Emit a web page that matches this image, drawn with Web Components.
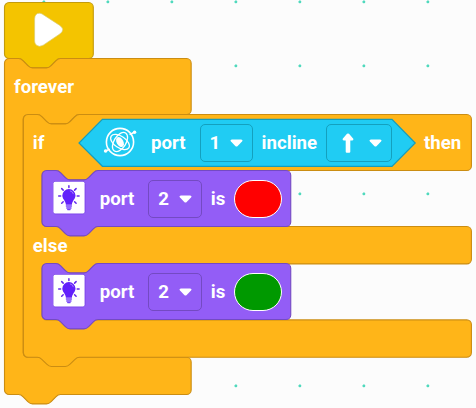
<!DOCTYPE html>
<html lang="en">
<head>
<meta charset="utf-8">
<title>Block program</title>
<style>
html,body{margin:0;width:476px;height:408px;overflow:hidden;background:#fcfcfc}
</style>
</head>
<body>
<block-workspace>
  <code-block kind="start" style="left:4px;top:3px"><play-icon></play-icon></code-block>
  <code-block kind="forever" style="left:4px;top:59px"><block-label>forever</block-label></code-block>
  <code-block kind="ifelse" style="left:23px;top:115px">
    <block-label class="if">if</block-label>
    <condition-block>
      <gyro-icon></gyro-icon>
      <block-label style="width:48.6px">port</block-label>
      <drop-field style="width:53px">1</drop-field>
      <block-label style="width:64.6px;margin-left:9px">incline</block-label>
      <drop-field style="width:66px"><arrow-icon></arrow-icon></drop-field>
    </condition-block>
    <block-label class="then">then</block-label>
    <block-label slot="else">else</block-label>
  </code-block>
  <code-block kind="action" style="left:42px;top:171px">
    <bulb-icon></bulb-icon><block-label style="width:48.6px">port</block-label>
    <drop-field style="width:53.5px">2</drop-field><block-label style="width:23.6px;margin-left:9px">is</block-label>
    <color-field style="--swatch:#f00"></color-field>
  </code-block>
  <code-block kind="action" style="left:42px;top:264px">
    <bulb-icon></bulb-icon><block-label style="width:48.6px">port</block-label>
    <drop-field style="width:53.5px">2</drop-field><block-label style="width:23.6px;margin-left:9px">is</block-label>
    <color-field style="--swatch:#009900"></color-field>
  </code-block>
</block-workspace>
<script>
const define = (name, html, setup) => customElements.define(name, class extends HTMLElement {
  constructor() {
    super();
    this.attachShadow({mode: 'open'}).innerHTML = html;
  }
  connectedCallback() { if (setup) setup(this); }
});

// Connector profile, in block units.
const tabR = 'c2 0 3 1 4 2l4 4c1 1 2 2 4 2h12c2 0 3-1 4-2l4-4c1-1 2-2 4-2';
const tabL = 'c-2 0-3 1-4 2l-4 4c-1 1-2 2-4 2h-12c-2 0-3-1-4-2l-4-4c-1-1-2-2-4-2';
const top_ = w => `M0 4A4 4 0 0 1 4 0H12${tabR}H${w - 4}a4 4 0 0 1 4 4`;
const bottom = h => `V${h - 4}a4 4 0 0 1-4 4H48${tabL}H4a4 4 0 0 1-4-4z`;
const mouth = (y1, y2, w) => `V${y1 - 4}a4 4 0 0 1-4 4H64${tabL}H20a4 4 0 0 0-4 4V${y2 - 4}a4 4 0 0 0 4 4H${w - 4}a4 4 0 0 1 4 4`;
const shapes = {
  start: {d: 'M0 4A4 4 0 0 1 4 0H72.1a4 4 0 0 1 4 4' + bottom(48), fill: '#f4c400', line: '#c39b0c', dx: .5},
  forever: {d: top_(160) + mouth(48, 256, 160) + bottom(288), fill: '#ffb518', line: '#cb8d12', dx: .5},
  ifelse: {d: top_(384) + mouth(48, 96, 384) + mouth(128, 176, 384) + bottom(208), fill: '#ffb518', line: '#cb8d12', dx: .4},
  action: {d: top_(213.2) + bottom(48), fill: '#935df6', line: '#744ac2', dx: 0}
};

define('block-workspace', `<style>
:host{display:block;position:relative;width:476px;height:408px;overflow:hidden;font:700 18.67px/22px Roboto,"Liberation Sans",sans-serif;color:#fff;
background:radial-gradient(circle at 31.9px 31.9px,#4fd9bd 0 1.1px,#4fd9bd00 1.8px) 12px -30px/64px 64px #fcfcfc}
</style><slot></slot>`);

define('code-block', `<style>
:host{display:block;position:absolute}
svg{position:absolute;left:0;top:0;overflow:visible;width:1px;height:1px}
.row{position:relative;display:flex;align-items:center;height:56px;box-sizing:border-box}
:host([kind=start]) .row{padding-left:30px}
:host([kind=forever]) .row{padding-left:10px}
:host([kind=ifelse]) .row{padding-left:9.8px;width:448px}
:host([kind=ifelse]) .else{position:relative;padding:64px 0 0 9.8px}
:host([kind=action]) .row{padding-left:10.5px;width:249px}
::slotted(.if){width:46.2px}
::slotted(.then){margin-left:9px}
</style><svg><path stroke-width=".95"/></svg>
<div class="row"><slot></slot></div><div class="else"><slot name="else"></slot></div>`, el => {
  const s = shapes[el.getAttribute('kind')], p = el.shadowRoot.querySelector('path');
  p.setAttribute('d', s.d); p.setAttribute('fill', s.fill); p.setAttribute('stroke', s.line);
  p.setAttribute('transform', `translate(${s.dx} -.45) scale(1.1667)`);
});

define('block-label', `<style>:host{display:block;flex:none;white-space:nowrap}</style><slot></slot>`);

define('condition-block', `<style>
:host{display:flex;flex:none;position:relative;align-items:center;width:336px;height:48px;box-sizing:border-box;padding-left:24px;--edge:#14a0be}
svg{position:absolute;inset:0;overflow:visible}
::slotted(*){position:relative}
</style><svg width="336" height="48"><path d="M23.4.4H313L336.2 24 313 47.3H23.4L0 24z" fill="#20ccf3" stroke="#149dbc" stroke-width="1.2"/></svg><slot></slot>`);

define('drop-field', `<style>
:host{display:flex;flex:none;align-items:center;justify-content:space-between;height:38px;box-sizing:border-box;padding:0 9px 0 8.9px;border:1.2px solid var(--edge,#744ac2);border-radius:5px}
svg{display:block;flex:none}
</style><span><slot></slot></span><svg width="13" height="8" viewBox="0 0 13 8"><path d="M1.8.4H11.2Q13.3.8 12 2.6L7.7 6.9Q6.5 8 5.3 6.9L1 2.6Q-.3.8 1.8.4z" fill="#fff"/></svg>`);

define('color-field', `<style>:host{display:block;flex:none;width:47.5px;height:38.5px;box-sizing:border-box;border:1.3px solid #fff;border-radius:19.25px;background:var(--swatch)}</style>`);

define('play-icon', `<style>:host{display:block}svg{display:block;position:relative;top:-1px}</style><svg width="31" height="36" viewBox="0 0 31 36"><path d="M.6 7Q.8 1.2 5.5 1.2 7 1.2 8.5 2.2L25.8 13.4Q31.6 17.6 25.8 22L9.2 33.2Q5.2 35.6 2.2 33 .6 31.4.6 29z" fill="#fff" stroke="#d9cd74" stroke-width=".7"/></svg>`);

define('arrow-icon', `<style>:host{display:block;margin-left:5.6px}svg{display:block}</style><svg width="12" height="20" viewBox="0 0 12 20"><path d="M5 .8Q6 0 7 .8L11.3 5.8Q11.8 7.4 10.3 7.6H8.3V18.8Q8.3 19.8 7.2 19.8H4.8Q3.7 19.8 3.7 18.8V7.6H1.7Q.2 7.4.7 5.8z" fill="#fff"/></svg>`);

define('gyro-icon', `<style>:host{display:block;flex:none;width:48px}svg{display:block;position:relative;top:-1px}</style><svg width="34" height="34" viewBox="-17 -17 34 34" fill="none" stroke="#fff" stroke-width="1.3" stroke-linecap="round">
<circle r="13.6" stroke-width="1.6"/>
<ellipse rx="10.6" ry="5.8" transform="rotate(34)"/>
<ellipse rx="10.6" ry="6" transform="rotate(-58)"/>
<ellipse rx="3.4" ry="5.4" transform="rotate(-28)" fill="#fff" stroke="none"/>
<path d="M10.2-7.6l4-2.2M-10.8 7.4l-3.4 1.6" stroke-width="1.6"/>
<circle cx="14.6" cy="-9.8" r="1.7" fill="#fff" stroke="none"/><circle cx="-14.4" cy="9" r="1.8" fill="#fff" stroke="none"/></svg>`);

define('bulb-icon', `<style>:host{display:block;flex:none;width:47.2px}svg{display:block;position:relative;top:-1px}</style><svg width="33" height="34" viewBox="0 0 33 34">
<rect x="0" y=".3" width="32" height="32.6" rx="2" fill="#fff" stroke="#733de7" stroke-width=".8"/>
<g transform="translate(15.9 14.9)"><path d="M0-6.8A6.6 6.6 0 0 1 6.6-.4C6.6 3.2 3.3 4.6 3 8.8H-3C-3.3 4.6-6.6 3.2-6.6-.4A6.6 6.6 0 0 1 0-6.8z" fill="#6220fb"/>
<path d="M1.4-5Q3.8-4.6 4.4-2.2" fill="none" stroke="#a684fa" stroke-width=".9" stroke-linecap="round"/>
<path d="M-2.5 10.1h5M-2.1 12.1h4.2M-1.2 13.7h2.4" stroke="#7440fa" stroke-width="1.4" stroke-linecap="round"/>
<path d="M0-10.2V-8.3M-7.2-7.3-5.7-5.8M7.2-7.3 5.7-5.8M-10.2.1H-8.3M10.2.1H8.3M-7.2 7.3-5.7 5.8M7.2 7.3 5.7 5.8" stroke="#6428ed" stroke-width="1.5" stroke-linecap="round"/></g></svg>`);
</script>
</body>
</html>
